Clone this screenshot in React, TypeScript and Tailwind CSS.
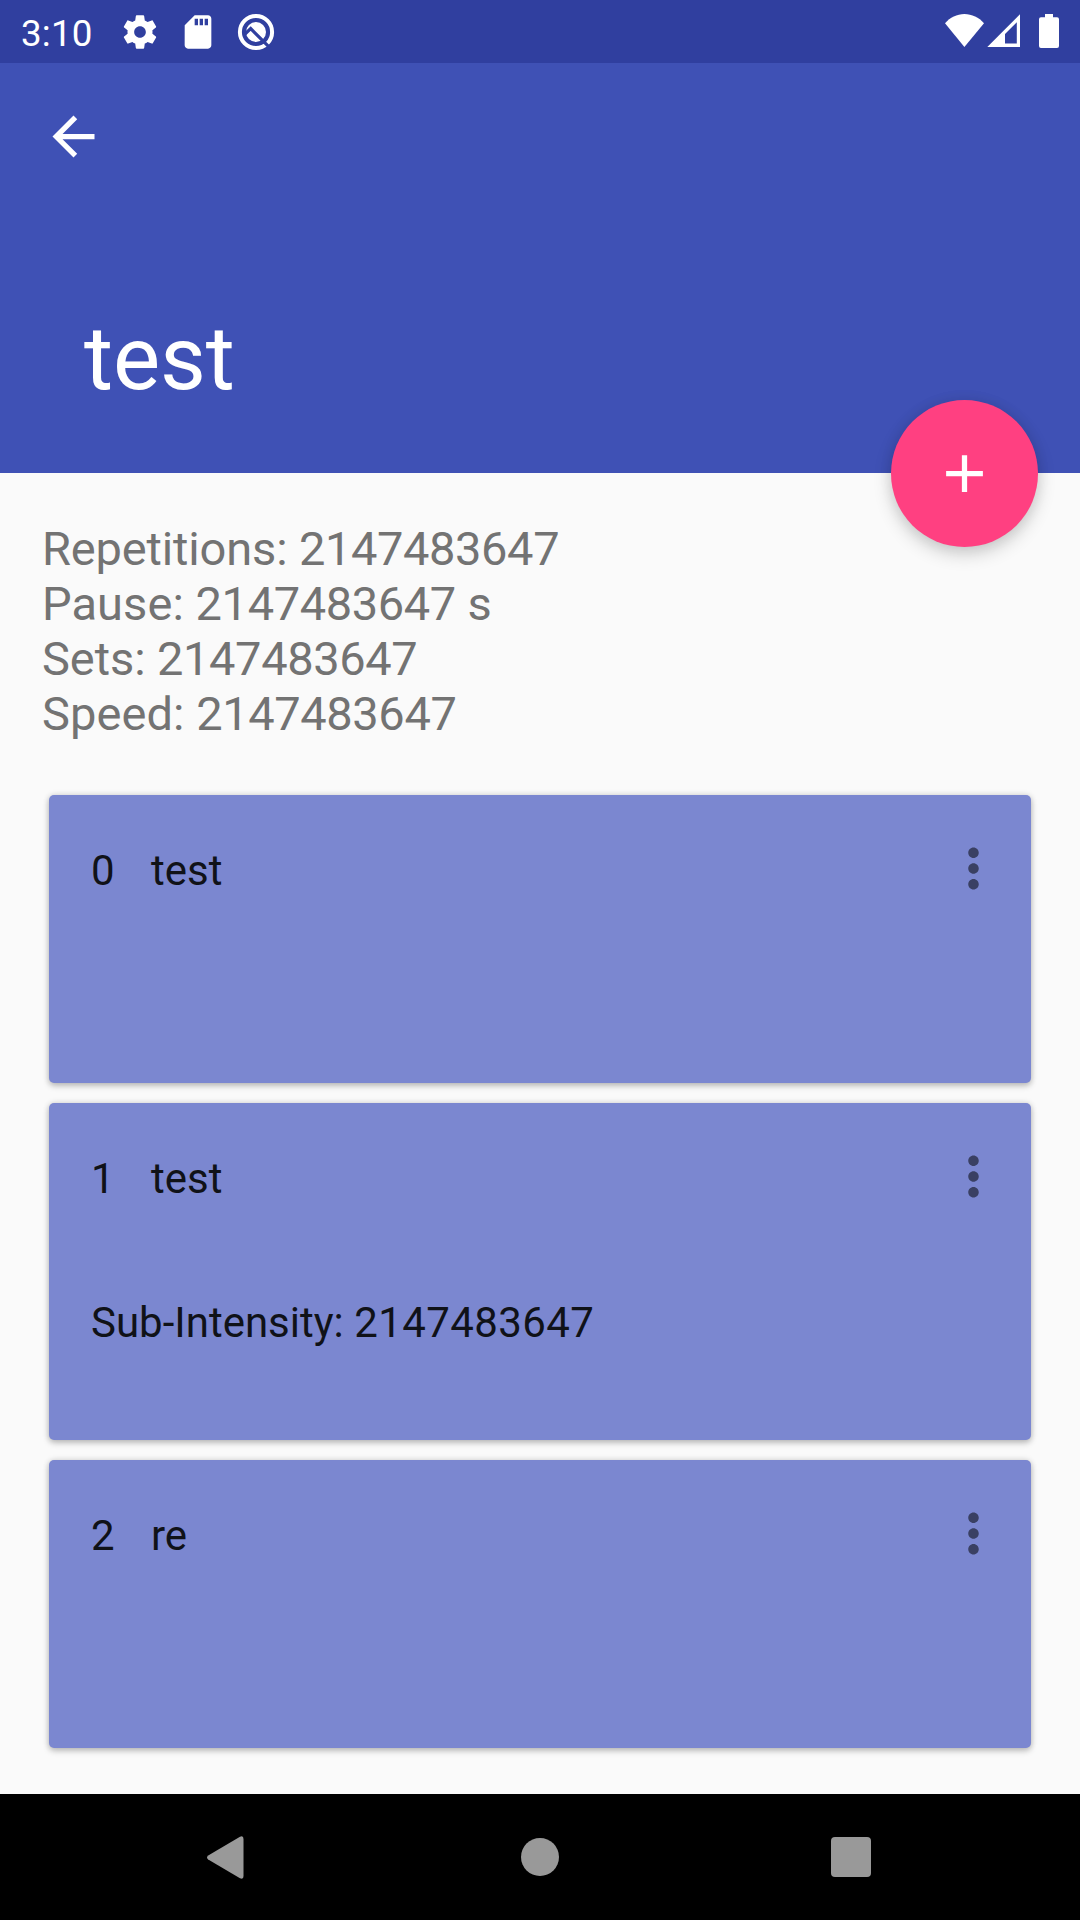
import React from "react";

type Exercise = { index: number; name: string; label?: string; value?: string };

const exercises: Exercise[] = [
  { index: 0, name: "test" },
  { index: 1, name: "test", label: "Sub-Intensity: ", value: "2147483647" },
  { index: 2, name: "re" },
];

const stats = [
  { label: "Repetitions: ", value: "2147483647", unit: "", tracking: "tracking-[-0.15px]" },
  { label: "Pause: ", value: "2147483647", unit: " s", tracking: "tracking-[0.07px]" },
  { label: "Sets: ", value: "2147483647", unit: "", tracking: "tracking-[-0.08px]" },
  { label: "Speed: ", value: "2147483647", unit: "", tracking: "tracking-[0.07px]" },
];

function StatusBar() {
  return (
    <div className="flex h-[63px] items-center justify-between bg-[#303f9f] pl-[21px] text-white">
      <div className="flex h-full items-center">
        <span className="mt-[3px] w-[99px] text-[36.75px] leading-[43px] tracking-[0.2px]">3:10</span>
        <svg className="size-10" viewBox="0 0 24 24" fill="currentColor">
          <path d="M19.43 12.98c.04-.32.07-.64.07-.98s-.03-.66-.07-.98l2.11-1.65c.19-.15.24-.42.12-.64l-2-3.46c-.12-.22-.39-.3-.61-.22l-2.49 1c-.52-.4-1.08-.73-1.69-.98l-.38-2.65C14.46 2.18 14.25 2 14 2h-4c-.25 0-.46.18-.49.42l-.38 2.65c-.61.25-1.17.59-1.69.98l-2.49-1c-.23-.09-.49 0-.61.22l-2 3.46c-.13.22-.07.49.12.64l2.11 1.65c-.04.32-.07.65-.07.98s.03.66.07.98l-2.11 1.65c-.19.15-.24.42-.12.64l2 3.46c.12.22.39.3.61.22l2.49-1c.52.4 1.08.73 1.69.98l.38 2.65c.03.24.24.42.49.42h4c.25 0 .46-.18.49-.42l.38-2.65c.61-.25 1.17-.59 1.69-.98l2.49 1c.23.09.49 0 .61-.22l2-3.46c.12-.22.07-.49-.12-.64l-2.11-1.65zM12 15.5c-1.93 0-3.5-1.57-3.5-3.5s1.57-3.5 3.5-3.5 3.5 1.57 3.5 3.5-1.57 3.5-3.5 3.5z" />
        </svg>
        <svg className="ml-[18px] size-10" viewBox="0 0 24 24" fill="currentColor">
          <path d="M18 2h-8L4.02 8 4 20c0 1.1.9 2 2 2h12c1.1 0 2-.9 2-2V4c0-1.1-.9-2-2-2zm-6 6h-2V4h2v4zm3 0h-2V4h2v4zm3 0h-2V4h2v4z" />
        </svg>
        <svg className="ml-[18px] size-10" viewBox="0 0 40 40" fill="none">
          <circle cx="20" cy="20" r="16.1" stroke="currentColor" strokeWidth="4" />
          <circle cx="20" cy="20" r="10" fill="currentColor" />
          <path d="M9 22L14.7 16.6L34 35.9" stroke="#303f9f" strokeWidth="3.2" />
        </svg>
      </div>
      <svg className="h-[63px] w-[160px]" viewBox="920 0 160 63" fill="currentColor">
        <path d="M945 23.2C950 17.5 957 14 964.4 14S979 17.5 984 23.2L964.4 47Z" />
        <path fillRule="evenodd" d="M987.3 47L1020 14.2V47ZM1005 43.5H1016.8V22.2L1005 34Z" />
        <path d="M1045 14H1053V17.3H1057Q1059 17.3 1059 19.3V46Q1059 48 1057 48H1041Q1039 48 1039 46V19.3Q1039 17.3 1041 17.3H1045Z" />
      </svg>
    </div>
  );
}

function Header() {
  return (
    <header className="relative h-[410px] bg-[#3f51b5] pt-[42px] pl-[42px] text-white">
      <button className="block size-[63px]" aria-label="Back">
        <svg className="size-[63px]" viewBox="0 0 24 24" fill="currentColor">
          <path d="M20 11H7.83l5.59-5.59L12 4l-8 8 8 8 1.41-1.41L7.83 13H20v-2z" />
        </svg>
      </button>
      <h1 className="mt-[138px] ml-[42px] text-[89px] leading-[105px] tracking-[-0.2px]">test</h1>
      <button
        className="absolute right-[42px] -bottom-[74px] flex size-[147px] items-center justify-center rounded-full bg-[#ff4081] shadow-[0_7px_18px_rgba(0,0,0,0.19),0_0_14px_rgba(0,0,0,0.07)]"
        aria-label="Add"
      >
        <svg className="size-[63px]" viewBox="0 0 24 24" fill="currentColor">
          <path d="M19 13h-6v6h-2v-6H5v-2h6V5h2v6h6v2z" />
        </svg>
      </button>
    </header>
  );
}

function ExerciseCard({ item }: { item: Exercise }) {
  return (
    <article
      className={`${item.value ? "h-[337px]" : "h-[288px]"} rounded-[5px] bg-[#7b87d0] pt-[42px] pl-[42px] text-[42px] leading-[49px] text-[#101218] shadow-[0_3px_6px_rgba(0,0,0,0.22),0_0_6px_rgba(0,0,0,0.14)]`}
    >
      <div className="flex h-[63px] items-center">
        <span className="mt-1 w-[60px]">{item.index}</span>
        <span className="mt-1 flex-1">{item.name}</span>
        <button className="mr-[26px] size-[63px]" aria-label="More options">
          <svg className="size-[63px]" viewBox="0 0 24 24" fill="#3a4063">
            <path d="M12 8c1.1 0 2-.9 2-2s-.9-2-2-2-2 .9-2 2 .9 2 2 2zm0 2c-1.1 0-2 .9-2 2s.9 2 2 2 2-.9 2-2-.9-2-2-2zm0 6c-1.1 0-2 .9-2 2s.9 2 2 2 2-.9 2-2-.9-2-2-2z" />
          </svg>
        </button>
      </div>
      {item.value && (
        <p className="mt-[90px]">
          {item.label}
          <span className="tracking-[0.4px]">{item.value}</span>
        </p>
      )}
    </article>
  );
}

function NavigationBar() {
  return (
    <nav className="flex h-[126px] items-center bg-black pl-[207px]">
      <svg className="h-[43px] w-[37px]" viewBox="0 0 37 43" fill="#999">
        <path d="M1.2 19.4L33 .8Q36.5-.8 36.5 3V40Q36.5 43.8 33 42.2L1.2 23.6Q-1.2 21.5 1.2 19.4Z" />
      </svg>
      <div className="ml-[277px] size-[38px] rounded-full bg-[#999]" />
      <div className="ml-[272px] size-10 rounded-[4px] bg-[#999]" />
    </nav>
  );
}

export default function App() {
  return (
    <div className="flex h-[1920px] w-[1080px] flex-col overflow-hidden bg-[#fafafa] font-['Roboto',sans-serif]">
      <StatusBar />
      <Header />
      <main className="flex-1 pt-[48px]">
        <div className="pl-[42px] text-[47px] leading-[55px] text-[#737373]">
          {stats.map((stat) => (
            <p key={stat.label}>
              <span className={stat.tracking}>{stat.label}</span>
              <span className="tracking-[-0.39px]">{stat.value}</span>
              {stat.unit}
            </p>
          ))}
        </div>
        <div className="mt-[54px] flex flex-col gap-5 px-[49px]">
          {exercises.map((item) => (
            <ExerciseCard key={item.index} item={item} />
          ))}
        </div>
      </main>
      <NavigationBar />
    </div>
  );
}
